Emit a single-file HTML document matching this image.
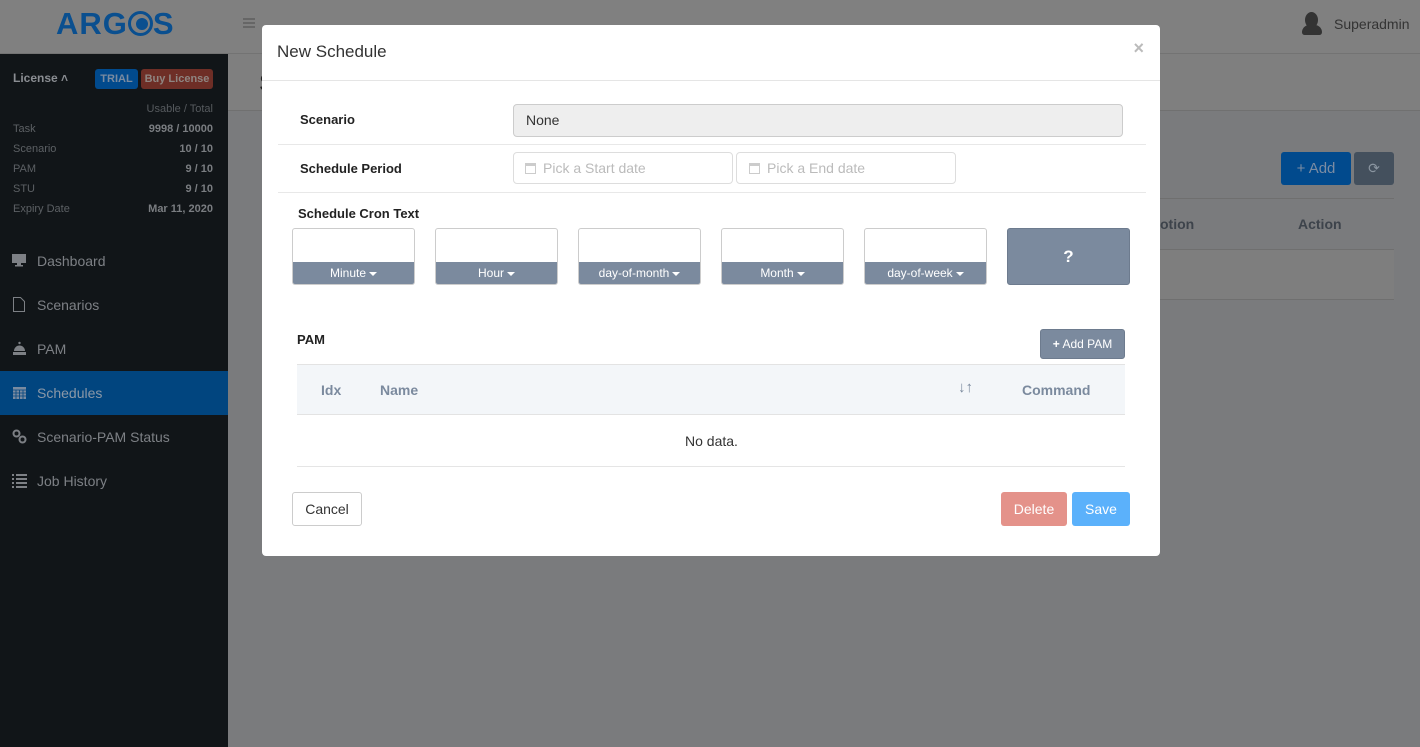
<!DOCTYPE html>
<html><head><meta charset="utf-8"><style>
*{box-sizing:border-box;margin:0;padding:0}
body{width:1420px;height:747px;overflow:hidden;font-family:"Liberation Sans",Arial,sans-serif;background:#7a7b7d;position:relative}
.abs{position:absolute}
.hdr{left:0;top:0;width:1420px;height:54px;background:#808080;border-bottom:1px solid #737373}
.logo{left:56px;top:6px;font-size:31px;font-weight:bold;color:#0a4f8f;letter-spacing:1px}
.side{left:0;top:54px;width:228px;height:693px;background:#111518}
.lic{color:#8a8d90;font-size:11px}
.nav{left:0;width:228px;height:44px;color:#7d8085;font-size:14px;padding-left:37px;line-height:44px}
.nav svg{position:absolute;left:12px;top:14px}
.modal{left:262px;top:25px;width:898px;height:531px;background:#fff;border-radius:4px}
.lbl{font-size:13px;font-weight:bold;color:#222}
.cron{width:123px;height:57px;border:1px solid #ccc;border-radius:3px;overflow:hidden;top:228px}
.cron div{position:absolute;left:0;bottom:0;width:100%;height:22px;background:#7b8a9e;color:#fff;font-size:12px;text-align:center;line-height:22px}
.caret{display:inline-block;border-left:4px solid transparent;border-right:4px solid transparent;border-top:4px solid #fff;vertical-align:middle;margin-left:3px}
</style></head><body>
<div class="abs hdr"></div>
<div class="abs logo">ARG<span style="display:inline-block;width:25px;height:25px;border:3px solid #0a4f8f;border-radius:50%;vertical-align:-2px;position:relative"><span style="position:absolute;left:5px;top:4px;width:12px;height:12px;border-radius:50%;background:#0a4f8f"></span></span>S</div>
<div class="abs" style="left:243px;top:18px;width:12px;height:2px;background:#666;box-shadow:0 4px #666,0 8px #666"></div>
<div class="abs" style="left:1302px;top:12px;width:20px;height:25px"><div style="width:13px;height:16px;border-radius:50%;background:#333;margin-left:3px"></div><div style="width:20px;height:10px;border-radius:8px 8px 3px 3px;background:#333;margin-top:-3px"></div></div>
<div class="abs" style="left:1334px;top:16px;font-size:14px;color:#333">Superadmin</div>
<div class="abs" style="left:228px;top:54px;width:1192px;height:57px;background:#7f7f7f;border-bottom:1px solid #707070"></div>
<div class="abs" style="left:259px;top:70px;font-size:24px;color:#222">S</div>
<div class="abs" style="left:1281px;top:152px;width:70px;height:33px;background:#014a8d;border-radius:3px;color:#7b8ca3;font-size:15px;line-height:33px;text-align:center">+ Add</div>
<div class="abs" style="left:1354px;top:152px;width:40px;height:33px;background:#44505d;border-radius:3px;color:#8a95a0;font-size:14px;line-height:33px;text-align:center">⟳</div>
<div class="abs" style="left:262px;top:198px;width:1132px;height:1px;background:#6f6f6f"></div>
<div class="abs" style="left:1160px;top:216px;font-size:14px;font-weight:bold;color:#3d434b">otion</div>
<div class="abs" style="left:1298px;top:216px;font-size:14px;font-weight:bold;color:#3d434b">Action</div>
<div class="abs" style="left:262px;top:249px;width:1132px;height:51px;background:#7e7e7e;border-top:1px solid #6f6f6f;border-bottom:1px solid #6f6f6f"></div>

<div class="abs side"></div>
<div class="abs" style="left:13px;top:71px;color:#8a8d92;font-size:12px;font-weight:bold">License ˄</div>
<div class="abs" style="left:95px;top:69px;width:43px;height:20px;background:#014a8d;border-radius:3px;color:#7a8ba0;font-size:11px;line-height:20px;text-align:center;font-weight:bold">TRIAL</div>
<div class="abs" style="left:141px;top:69px;width:72px;height:20px;background:#6e2e26;border-radius:3px;color:#8f8581;font-size:11px;line-height:20px;text-align:center;font-weight:bold">Buy License</div>
<div class="abs lic" style="right:1207px;top:103px;color:#565a5e">Usable / Total</div>
<div class="abs lic" style="left:13px;top:119px;line-height:20px;color:#5c6064">Task<br>Scenario<br>PAM<br>STU<br>Expiry Date</div>
<div class="abs lic" style="left:100px;width:113px;text-align:right;top:119px;line-height:20px;font-weight:bold;color:#7a7d81">9998 / 10000<br>10 / 10<br>9 / 10<br>9 / 10<br>Mar 11, 2020</div>
<div class="abs nav" style="top:239px">Dashboard<svg width="15" height="15" viewBox="0 0 15 15"><rect x="0" y="1" width="14" height="9" fill="#7d8085"/><rect x="5" y="10" width="4" height="2" fill="#7d8085"/><rect x="3" y="12" width="8" height="1.5" fill="#7d8085"/></svg></div>
<div class="abs nav" style="top:283px">Scenarios<svg width="15" height="15" viewBox="0 0 15 15"><path d="M1.5 .5h7l4 4v10h-11z" fill="none" stroke="#7d8085"/></svg></div>
<div class="abs nav" style="top:327px">PAM<svg width="15" height="15" viewBox="0 0 15 15"><circle cx="7.5" cy="2" r="1.2" fill="#7d8085"/><path d="M2 10a5.5 5.5 0 0 1 11 0z M1 11h13v3H1z" fill="#7d8085"/></svg></div>
<div class="abs nav" style="top:371px;background:#01457f;color:#8b98a7">Schedules<svg width="15" height="15" viewBox="0 0 15 15"><rect x="1" y="2" width="13" height="12" fill="#7a8ba0"/><path d="M1 5h13M1 8h13M1 11h13M4 5v9M7.5 5v9M11 5v9" stroke="#01457f" stroke-width=".8"/></svg></div>
<div class="abs nav" style="top:415px">Scenario-PAM Status<svg width="15" height="15" viewBox="0 0 15 15"><circle cx="4.5" cy="4.5" r="3" fill="none" stroke="#7d8085" stroke-width="2"/><circle cx="10.5" cy="10.5" r="3" fill="none" stroke="#7d8085" stroke-width="2"/></svg></div>
<div class="abs nav" style="top:459px">Job History<svg width="15" height="15" viewBox="0 0 15 15"><path d="M0 2h2M0 6h2M0 10h2M0 14h2M4 2h11M4 6h11M4 10h11M4 14h11" stroke="#7d8085" stroke-width="2"/></svg></div>

<div class="abs modal">
 <div class="abs" style="left:15px;top:17px;font-size:17px;color:#333">New Schedule</div>
 <div class="abs" style="right:16px;top:13px;font-size:18px;color:#bbb;font-weight:bold">×</div>
 <div class="abs" style="left:0;top:55px;width:898px;height:1px;background:#e5e5e5"></div>
 <div class="abs lbl" style="left:38px;top:87px">Scenario</div>
 <div class="abs" style="left:251px;top:79px;width:610px;height:33px;background:#eee;border:1px solid #ccc;border-radius:4px;font-size:14px;color:#333;padding:7px 12px">None</div>
 <div class="abs" style="left:16px;top:119px;width:868px;height:1px;background:#e8e8e8"></div>
 <div class="abs lbl" style="left:38px;top:136px">Schedule Period</div>
 <div class="abs" style="left:251px;top:127px;width:220px;height:32px;border:1px solid #ddd;border-radius:4px;font-size:14px;color:#bbb;padding:7px 29px">Pick a Start date<span style="position:absolute;left:11px;top:10px;width:11px;height:11px;border:1px solid #ccc;border-top-width:3px"></span></div>
 <div class="abs" style="left:474px;top:127px;width:220px;height:32px;border:1px solid #ddd;border-radius:4px;font-size:14px;color:#bbb;padding:7px 30px">Pick a End date<span style="position:absolute;left:12px;top:10px;width:11px;height:11px;border:1px solid #ccc;border-top-width:3px"></span></div>
 <div class="abs" style="left:16px;top:167px;width:868px;height:1px;background:#e8e8e8"></div>
 <div class="abs lbl" style="left:36px;top:181px">Schedule Cron Text</div>
</div>
<div class="abs cron" style="left:292px"><div>Minute<span class="caret"></span></div></div>
<div class="abs cron" style="left:435px"><div>Hour<span class="caret"></span></div></div>
<div class="abs cron" style="left:578px"><div>day-of-month<span class="caret"></span></div></div>
<div class="abs cron" style="left:721px"><div>Month<span class="caret"></span></div></div>
<div class="abs cron" style="left:864px"><div>day-of-week<span class="caret"></span></div></div>
<div class="abs" style="left:1007px;top:228px;width:123px;height:57px;background:#7b8a9e;border:1px solid #6d7b8e;border-radius:3px;color:#fff;font-weight:bold;font-size:17px;text-align:center;line-height:55px">?</div>
<div class="abs lbl" style="left:297px;top:332px">PAM</div>
<div class="abs" style="left:1040px;top:329px;width:85px;height:30px;background:#7b8a9e;border:1px solid #6d7b8e;border-radius:3px;color:#fff;font-size:12px;line-height:28px;text-align:center"><b>+</b> Add PAM</div>
<div class="abs" style="left:297px;top:364px;width:828px;height:51px;background:#f3f6f9;border-top:1px solid #e3e3e3;border-bottom:1px solid #e3e3e3;font-size:14px;font-weight:bold;color:#7b8a9e">
 <span class="abs" style="left:24px;top:17px">Idx</span><span class="abs" style="left:83px;top:17px">Name</span><span class="abs" style="left:661px;top:14px;font-size:15px">↓↑</span><span class="abs" style="left:725px;top:17px">Command</span></div>
<div class="abs" style="left:685px;top:433px;font-size:14px;color:#333">No data.</div>
<div class="abs" style="left:297px;top:466px;width:828px;height:1px;background:#e5e5e5"></div>
<div class="abs" style="left:292px;top:492px;width:70px;height:34px;border:1px solid #ccc;border-radius:3px;font-size:14px;color:#333;text-align:center;line-height:32px">Cancel</div>
<div class="abs" style="left:1001px;top:492px;width:66px;height:34px;background:#e4928a;border-radius:3px;font-size:14px;color:#fff;text-align:center;line-height:34px">Delete</div>
<div class="abs" style="left:1072px;top:492px;width:58px;height:34px;background:#5bb1fb;border-radius:3px;font-size:14px;color:#fff;text-align:center;line-height:34px">Save</div>
</body></html>
